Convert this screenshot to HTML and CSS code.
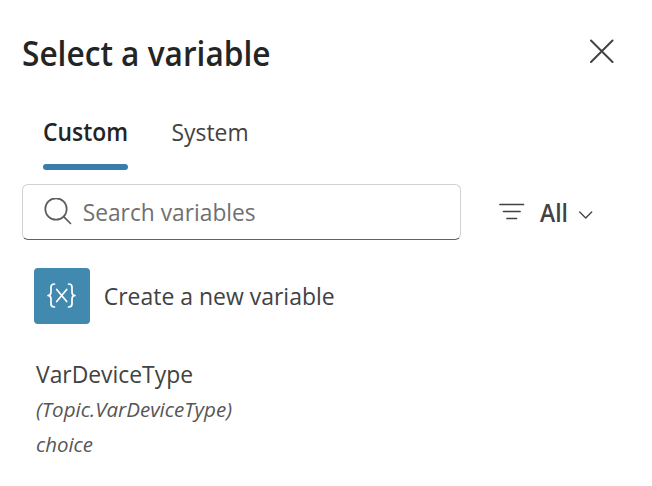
FILE: index.html
```
<!DOCTYPE html>
<html lang="en">
<head>
<meta charset="utf-8">
<title>Select a variable</title>
<link rel="stylesheet" href="styles.css">
</head>
<body>
<main class="panel">
  <header class="header">
    <h1 class="title"><svg class="fit" width="248" height="46"><text x="0" y="35" textLength="248.500" lengthAdjust="spacingAndGlyphs">Select a variable</text></svg></h1>
    <button class="close" aria-label="Close"><svg width="24" height="24" viewBox="0 0 24 24"><path d="M1 1.500l21.500 21.500M22.500 1.500L1 23"/></svg></button>
  </header>
  <nav class="tabs">
    <button class="tab active"><svg class="fit" width="85" height="36"><text x="0" y="26" textLength="85" lengthAdjust="spacingAndGlyphs">Custom</text></svg></button>
    <button class="tab"><svg class="fit" width="77" height="36"><text x="0.600" y="26" textLength="77" lengthAdjust="spacingAndGlyphs">System</text></svg></button>
  </nav>
  <div class="tools">
    <div class="search">
      <svg class="icon" width="28" height="28" viewBox="0 0 28 28"><circle cx="12" cy="11" r="10.700"/><path d="M19.700 18.700l6.800 6.800"/></svg>
      <svg class="fit" width="174" height="36"><text x="0.700" y="27" textLength="173" lengthAdjust="spacingAndGlyphs">Search variables</text></svg>
    </div>
    <button class="filter">
      <svg class="icon" width="26" height="18" viewBox="0 0 26 18"><path d="M1 1.500h23.500M4.500 8.500h16.500M8 15.500h9.500"/></svg>
      <svg class="fit label" width="28" height="36"><text x="0" y="27.500" textLength="28" lengthAdjust="spacingAndGlyphs">All</text></svg>
      <svg class="icon chevron" width="14" height="8" viewBox="0 0 14 8"><path d="M.7 1l6 6 6-6"/></svg>
    </button>
  </div>
  <button class="create">
    <span class="tile"><svg width="30" height="26" viewBox="0 0 30 26"><path d="M7.500 1Q4 1 4 4v5q0 3.500-3 3.500 3 0 3 3.500v5q0 3 3.500 3M21.500 1Q25 1 25 4v5q0 3.500 3 3.500-3 0-3 3.500v5q0 3-3.500 3M9.700 6.500l10 12M19.700 6.500l-10 12"/></svg></span>
    <svg class="fit" width="232" height="36"><text x="0.700" y="27" textLength="231" lengthAdjust="spacingAndGlyphs">Create a new variable</text></svg>
  </button>
  <section class="variable">
    <svg class="fit name" width="158" height="36"><text x="0" y="26" textLength="157" lengthAdjust="spacingAndGlyphs">VarDeviceType</text></svg>
    <svg class="fit meta" width="198" height="35"><text x="0" y="24" textLength="196" lengthAdjust="spacingAndGlyphs">(Topic.VarDeviceType)</text></svg>
    <svg class="fit meta" width="60" height="35"><text x="0" y="24" textLength="57" lengthAdjust="spacingAndGlyphs">choice</text></svg>
  </section>
</main>
</body>
</html>
```
FILE: styles.css
```
* { box-sizing: border-box; }
body { margin: 0; background: #fff; color: #242424; font-family: "Open Sans", "Noto Sans", sans-serif; }
button { padding: 0; border: 0; background: none; font: inherit; color: inherit; }
svg { display: block; flex: none; }
path, circle { fill: none; stroke: currentColor; stroke-width: 1.7; stroke-linecap: round; stroke-linejoin: round; }
.panel { width: 652px; height: 486px; padding: 31px 38px 0 22px; }
.fit { overflow: visible; font-size: 24.5px; fill: currentColor; }
.header { display: flex; justify-content: space-between; height: 84px; }
.title { margin: 0; font-weight: 600; }
.title .fit { font-size: 33.5px; }
.close { height: 24px; margin-top: 8px; color: #424242; }
.close path { stroke-width: 2; }
.tabs { display: flex; gap: 43px; height: 69px; padding-left: 21px; }
.tab { display: flex; flex-direction: column; justify-content: space-between; height: 55px; color: #424242; }
.tab.active { color: #242424; font-weight: 600; }
.tab.active::after { content: ""; width: 85px; height: 6px; border-radius: 3px; background: #3a7dad; }
.tools { display: flex; align-items: center; height: 56px; }
.search { display: flex; align-items: center; gap: 10px; width: 439px; height: 56px; padding-left: 21px; border: 1px solid #d1d1d1; border-bottom-color: #616161; border-radius: 6px; color: #707070; }
.search .icon { color: #5c5c5c; }
.filter { display: flex; align-items: center; margin-left: 38px; color: #424242; }
.label { margin-left: 15px; font-weight: 600; }
.chevron { margin: 6px 0 0 11px; }
.chevron path { stroke-width: 1.3; }
.create { display: flex; align-items: center; gap: 13px; margin: 28px 0 0 12px; height: 56px; color: #424242; }
.tile { display: grid; place-items: center; width: 56px; height: 56px; border-radius: 4px; background: #4289b0; color: #fff; }
.variable { padding: 33px 0 0 14px; color: #424242; }
.meta { font-size: 20.5px; font-style: italic; color: #565656; }
```
